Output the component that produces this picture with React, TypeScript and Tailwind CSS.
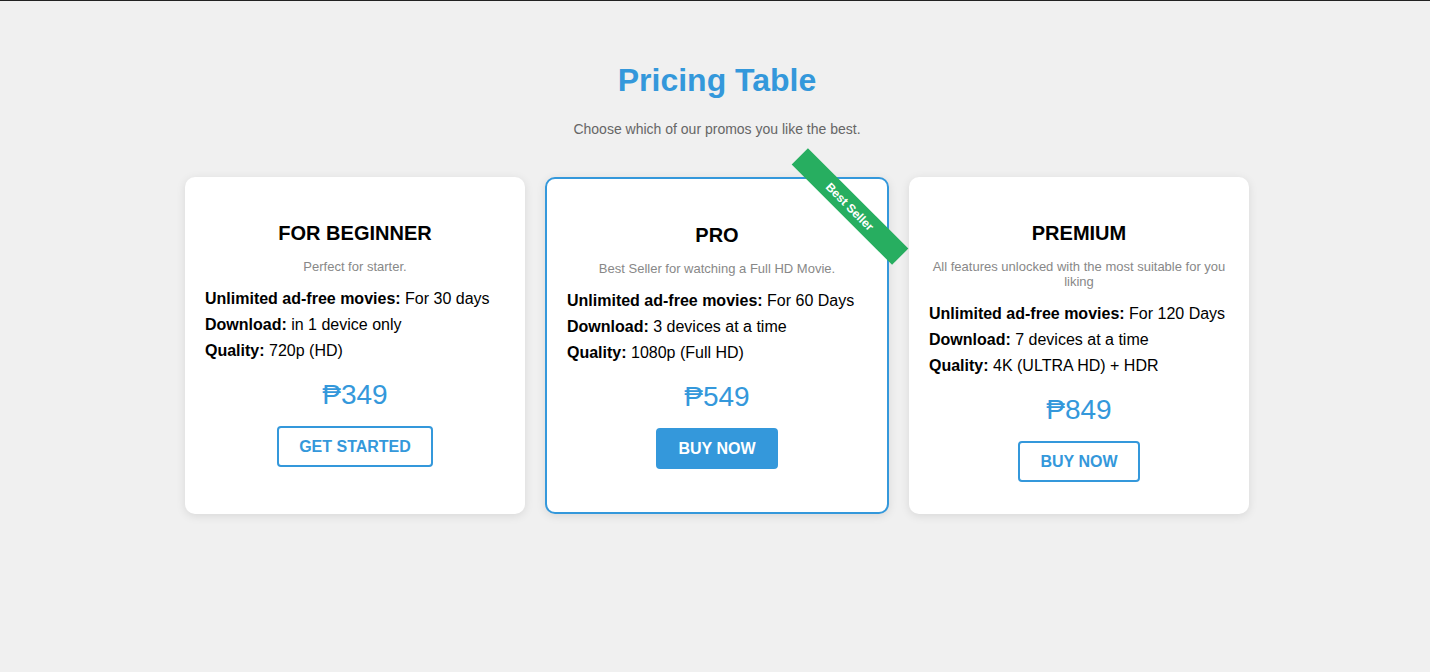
import React from 'react';

type Plan = {
  name: string;
  desc: string;
  features: [string, string][];
  price: string;
  cta: string;
  featured?: boolean;
};

const plans: Plan[] = [
  {
    name: 'FOR BEGINNER',
    desc: 'Perfect for starter.',
    features: [
      ['Unlimited ad-free movies:', 'For 30 days'],
      ['Download:', 'in 1 device only'],
      ['Quality:', '720p (HD)'],
    ],
    price: '₱349',
    cta: 'GET STARTED',
  },
  {
    name: 'PRO',
    desc: 'Best Seller for watching a Full HD Movie.',
    features: [
      ['Unlimited ad-free movies:', 'For 60 Days'],
      ['Download:', '3 devices at a time'],
      ['Quality:', '1080p (Full HD)'],
    ],
    price: '₱549',
    cta: 'BUY NOW',
    featured: true,
  },
  {
    name: 'PREMIUM',
    desc: 'All features unlocked with the most suitable for you liking',
    features: [
      ['Unlimited ad-free movies:', 'For 120 Days'],
      ['Download:', '7 devices at a time'],
      ['Quality:', '4K (ULTRA HD) + HDR'],
    ],
    price: '₱849',
    cta: 'BUY NOW',
  },
];

function PlanCard({ plan }: { plan: Plan }) {
  return (
    <div
      className={
        plan.featured
          ? 'relative w-[344px] rounded-[10px] border-2 border-[#3498db] bg-white px-5 pt-[45px] pb-[32px] shadow-[0_2px_10px_rgba(0,0,0,0.1)]'
          : 'relative w-[340px] rounded-[10px] bg-white px-5 pt-[45px] pb-[32px] shadow-[0_2px_10px_rgba(0,0,0,0.1)]'
      }
    >
      {plan.featured && (
        <div className="absolute top-[16px] right-[-34px] flex h-[23px] w-[142px] rotate-45 items-center justify-center bg-[#27ae60] text-[12px] font-bold text-white">
          Best Seller
        </div>
      )}
      <h2 className="text-center text-[20px] leading-[23px] font-bold text-black">{plan.name}</h2>
      <p className="mt-[14px] text-center text-[13px] leading-[15px] text-[#888]">{plan.desc}</p>
      <ul className="mt-[12px] text-[16px] leading-[26px] text-black">
        {plan.features.map(([k, v]) => (
          <li key={k}>
            <span className="font-bold">{k}</span> {v}
          </li>
        ))}
      </ul>
      <div className="mt-[15px] text-center text-[28px] leading-[32px] text-[#3498db]">{plan.price}</div>
      <div className="mt-[15px] flex justify-center">
        <button
          className={
            plan.featured
              ? 'h-[41px] rounded-[4px] border-2 border-[#3498db] bg-[#3498db] px-5 text-[16px] font-bold text-white'
              : 'h-[41px] rounded-[4px] border-2 border-[#3498db] bg-white px-5 text-[16px] font-bold text-[#3498db]'
          }
        >
          {plan.cta}
        </button>
      </div>
    </div>
  );
}

export default function App() {
  return (
    <div className="min-h-screen bg-[#f0f0f0] font-['Liberation_Sans',Arial,'DejaVu_Sans',sans-serif]">
      <div className="h-px bg-[#222]" />
      <div className="pl-1">
        <h1 className="mt-[61px] text-center text-[32px] leading-[37px] font-bold text-[#3498db]">Pricing Table</h1>
        <p className="mt-[22px] text-center text-[14px] leading-[16px] text-[#666]">
          Choose which of our promos you like the best.
        </p>
        <div className="mt-[40px] flex justify-center gap-5">
          {plans.map((p) => (
            <PlanCard key={p.name} plan={p} />
          ))}
        </div>
      </div>
    </div>
  );
}
